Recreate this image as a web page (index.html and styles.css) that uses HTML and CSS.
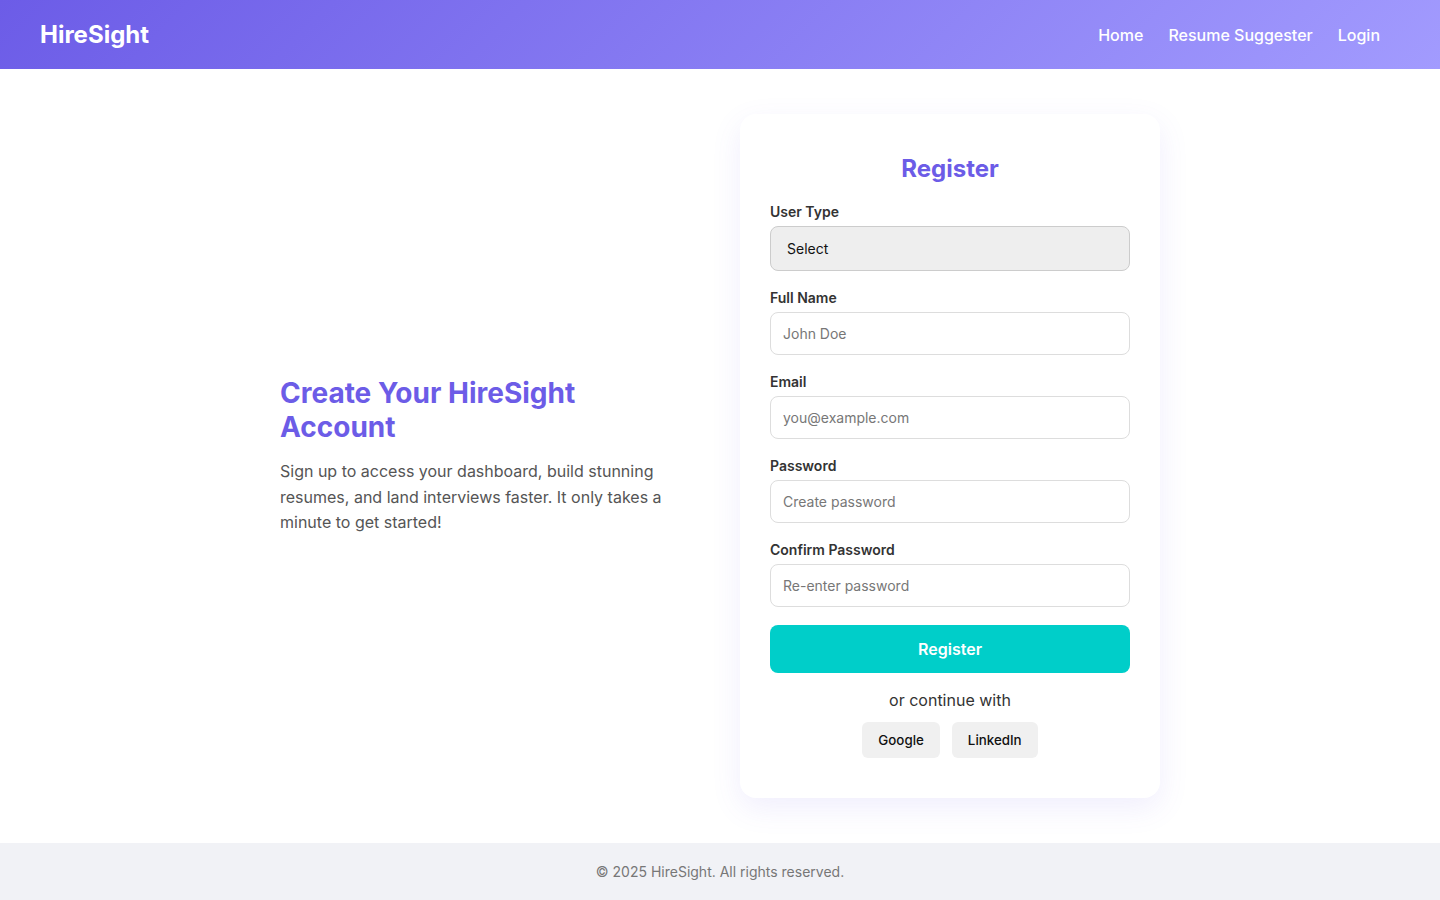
FILE: index.html
```html
<!DOCTYPE html>
<html lang="en">
<head>
<meta charset="utf-8">
<title>HireSight - Register</title>
<link rel="stylesheet" href="styles.css">
</head>
<body>
<header class="topbar">
  <div class="logo">HireSight</div>
  <nav class="nav">
    <a href="#">Home</a>
    <a href="#">Resume Suggester</a>
    <a href="#">Login</a>
  </nav>
</header>
<main class="main">
  <section class="intro">
    <h1>Create Your HireSight Account</h1>
    <p>Sign up to access your dashboard, build stunning resumes, and land interviews faster. It only takes a minute to get started!</p>
  </section>
  <form class="card">
    <h2>Register</h2>
    <div class="group">
      <label>User Type</label>
      <select class="select"><option>Select</option></select>
    </div>
    <div class="group">
      <label>Full Name</label>
      <input class="input" type="text" placeholder="John Doe">
    </div>
    <div class="group">
      <label>Email</label>
      <input class="input" type="email" placeholder="you@example.com">
    </div>
    <div class="group">
      <label>Password</label>
      <input class="input" type="password" placeholder="Create password">
    </div>
    <div class="group">
      <label>Confirm Password</label>
      <input class="input" type="password" placeholder="Re-enter password">
    </div>
    <button type="button" class="submit">Register</button>
    <p class="alt">or continue with</p>
    <div class="social">
      <button type="button" class="soc">Google</button>
      <button type="button" class="soc">LinkedIn</button>
    </div>
  </form>
</main>
<footer class="footer">© 2025 HireSight. All rights reserved.</footer>
</body>
</html>
```
FILE: styles.css
```css
* { box-sizing: border-box; }
html, body { margin: 0; padding: 0; }
body {
  font-family: Inter, "Noto Sans", sans-serif;
  background: #fff;
  color: #333;
}
.topbar {
  height: 69px;
  display: flex;
  align-items: center;
  justify-content: space-between;
  padding: 0 40px;
  background: linear-gradient(135deg, #6c5ce7 0%, #a29bfe 100%);
}
.logo {
  color: #fff;
  font-size: 24px;
  font-weight: 700;
}
.nav {
  display: flex;
  gap: 25px;
  margin-right: 20px;
}
.nav a {
  color: #fff;
  text-decoration: none;
  font-size: 16px;
  font-weight: 500;
}
.main {
  display: flex;
  justify-content: center;
  align-items: center;
  gap: 60px;
  padding: 45px 0;
}
.intro { width: 400px; }
.intro h1 {
  margin: 0 0 15px;
  font-size: 28px;
  line-height: 34px;
  font-weight: 700;
  color: #6c5ce7;
}
.intro p {
  margin: 0;
  font-size: 16px;
  line-height: 25.6px;
  color: #555;
}
.card {
  width: 420px;
  background: #fff;
  border-radius: 16px;
  padding: 40px 30px;
  box-shadow: 0 10px 30px rgba(108, 92, 231, 0.1);
}
.card h2 {
  margin: 0 0 20px;
  text-align: center;
  font-size: 24px;
  line-height: 29px;
  font-weight: 700;
  color: #6c5ce7;
}
.group { margin-bottom: 18px; }
.group label {
  display: block;
  font-size: 14px;
  line-height: 17px;
  font-weight: 600;
  color: #333;
  margin-bottom: 6px;
}
.input, .select {
  display: block;
  width: 100%;
  font-family: inherit;
  font-size: 14px;
  border-radius: 8px;
  outline: none;
}
.input {
  height: 43px;
  padding: 0 12px;
  border: 1px solid #ddd;
  background: #fff;
  color: #333;
}
.input::placeholder { color: #777; }
.select {
  height: 45px;
  padding: 0 16px;
  border: 1px solid #ccc;
  background: #eee;
  color: #111;
  appearance: none;
  -webkit-appearance: none;
}
.submit {
  display: block;
  width: 100%;
  height: 48px;
  border: none;
  border-radius: 8px;
  background: #00cec9;
  color: #fff;
  font-family: inherit;
  font-size: 16px;
  font-weight: 600;
}
.alt {
  margin: 17px 0 12px;
  text-align: center;
  font-size: 16px;
  line-height: 20px;
  color: #333;
}
.social {
  display: flex;
  justify-content: center;
  gap: 12px;
}
.soc {
  height: 36px;
  padding: 0 16px;
  border: none;
  border-radius: 6px;
  background: #f0f0f0;
  color: #111;
  font-family: inherit;
  font-size: 13.33px;
  font-weight: 500;
}
.footer {
  background: #f1f2f6;
  text-align: center;
  font-size: 14px;
  line-height: 17px;
  padding: 20px;
  color: #777;
}
```
